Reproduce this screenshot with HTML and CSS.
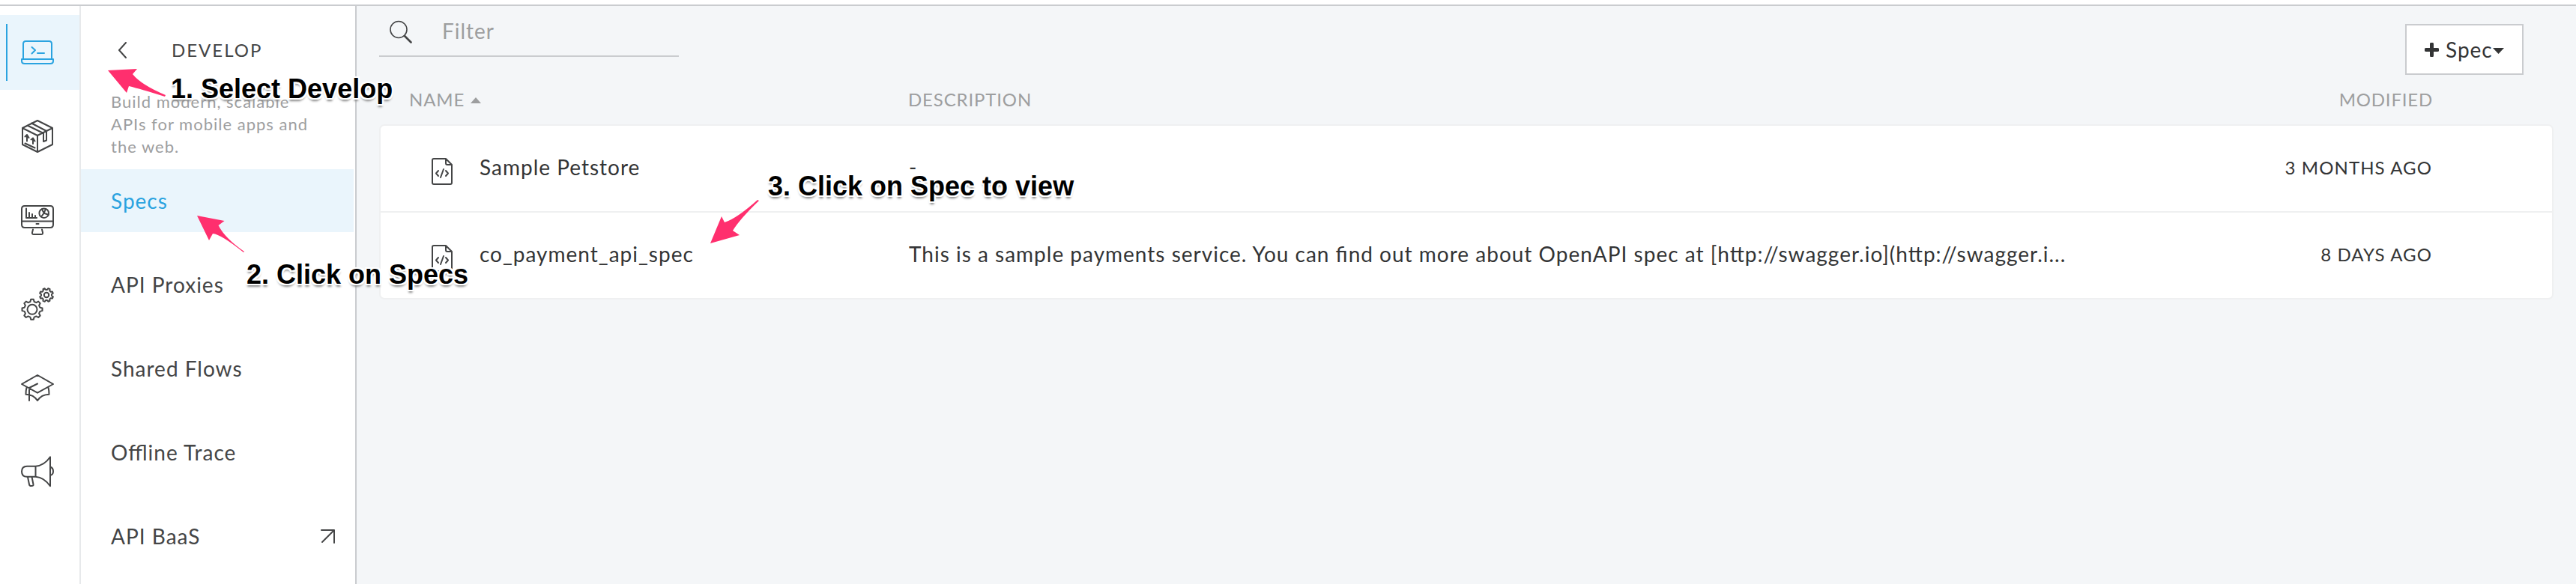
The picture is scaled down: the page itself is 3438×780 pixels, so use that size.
FILE: index.html
```html
<!DOCTYPE html>
<html lang="en">
<head>
<meta charset="utf-8">
<title>Specs</title>
<link rel="stylesheet" href="styles.css">
</head>
<body>
<div class="app">
  <nav class="rail">
    <a class="rail-item active"><svg viewBox="0 0 44 44"><path d="M3 31V10.500Q3 7 6.500 7h31q3.500 0 3.500 3.500V31M1 31h42v2.500q0 3.500-4 3.500H5q-4 0-4-3.500zM14.500 15l4.500 4-4.500 4.500M22 23h9"/></svg></a>
    <a class="rail-item"><svg viewBox="0 0 44 44"><path d="M22 1l20 10v22L22 43 2 33V11zM2 11l20 10 20-10M22 21v22M8.500 7.500L30 18v11l4-1.500V15L14 4.500M8 20v8.500M5.500 22.500L8 20l2.500 4M16 24.500V32M13.500 26.500l2.500-2 2.500 4M5.500 31.500l13 6"/></svg></a>
    <a class="rail-item"><svg viewBox="0 0 44 44"><path d="M5 3h34q4 0 4 4v21q0 4-4 4H5q-4 0-4-4V7q0-4 4-4zM1 23.500h42M20.500 27h3M16 34.500l-1 4q-.500 2.500 2 2.500h10q2.500 0 2-2.500l-1-4M7 6.500V19h14M11 19v-7M15 19v-5M19 19v-3"/><circle cx="30.700" cy="12.700" r="6.300"/><path d="M28 7.500l2.700 5.200L33 7M30.700 12.700l6 2M30.700 12.700L27 17.500"/></svg></a>
    <a class="rail-item"><svg viewBox="0 0 44 44"><defs><path id="gear" vector-effect="non-scaling-stroke" d="M-2.600-10.300L-1.800-13.500H1.800L2.600-10.300 5.400-9.100 8.200-10.700 10.700-8.200 9.100-5.400 10.300-2.600 13.500-1.800V1.800L10.300 2.600 9.100 5.400 10.700 8.200 8.200 10.700 5.400 9.100 2.600 10.300 1.800 13.500H-1.800L-2.600 10.300-5.400 9.100-8.200 10.700-10.700 8.200-9.100 5.400-10.300 2.600-13.500 1.800V-1.800L-10.300-2.600-9.100-5.400-10.700-8.200-8.200-10.700-5.400-9.100z"/></defs><use href="#gear" transform="translate(15 29.300)"/><circle cx="15" cy="29.300" r="6.500"/><use href="#gear" transform="translate(34 10) rotate(22.500) scale(.67)"/><circle cx="34" cy="10" r="3.200"/></svg></a>
    <a class="rail-item"><svg viewBox="0 0 44 44"><path d="M1 17L22 5l21 12-21 11.700zM22 16.500L11 22v17M7.500 21.500q-1 4-1 9.200Q17 31 22 39q5-8 15.500-8.300 0-5.200-1-9.200"/></svg></a>
    <a class="rail-item"><svg viewBox="0 0 44 44"><path d="M19.500 14.700H8q-7 0-7 7t7 7h11.500zM19.500 14.700Q31 14 39 2.300v39Q31 29.500 19.500 28.700M39 15.500q4 1.500 4 6T39 27M9 29l2 10q.500 2.500 3 2 3 0 2.500-2L14.500 29"/></svg></a>
  </nav>
  <aside class="panel">
    <div class="panel-head"><svg class="back" viewBox="0 0 12 22"><path d="M11 1L2 11l9 10"/></svg><h1>DEVELOP</h1></div>
    <p class="blurb">Build modern, scalable APIs for mobile apps and the web.</p>
    <ul class="menu">
      <li class="active"><span>Specs</span></li>
      <li><span>API Proxies</span></li>
      <li><span>Shared Flows</span></li>
      <li><span>Offline Trace</span></li>
      <li><span>API BaaS</span><svg class="ext" viewBox="0 0 20 20"><path d="M1 2h17v17M18 2L2 18"/></svg></li>
    </ul>
  </aside>
  <main class="main">
    <div class="toolbar">
      <div class="filter"><svg viewBox="0 0 30 31"><circle cx="12" cy="12.500" r="11"/><path class="handle" d="M20 21l8.500 8.500"/></svg><span>Filter</span></div>
      <button class="add"><svg class="plus" viewBox="0 0 19 19"><path d="M9.500 2v15M2 9.500h15"/></svg><span>Spec</span><svg class="caret" viewBox="0 0 15 8"><path d="M0 0h15L7.500 8z"/></svg></button>
    </div>
    <div class="row head"><span class="name">NAME<svg class="sort" viewBox="0 0 14 8"><path d="M7 0l7 8H0z"/></svg></span><span class="desc">DESCRIPTION</span><span class="mod">MODIFIED</span></div>
    <div class="table">
      <div class="row"><span class="name"><svg class="file" viewBox="0 0 28 36"><path d="M3 1h16l8 8v24q0 2-2 2H3q-2 0-2-2V3q0-2 2-2zM19 1v6q0 2 2 2h6M9 17l-3 3.500 3 3.500M19 17l3 3.500-3 3.500M16 15l-4 11"/></svg><span>Sample Petstore</span></span><span class="desc">-</span><span class="mod">3 MONTHS AGO</span></div>
      <div class="row"><span class="name"><svg class="file" viewBox="0 0 28 36"><path d="M3 1h16l8 8v24q0 2-2 2H3q-2 0-2-2V3q0-2 2-2zM19 1v6q0 2 2 2h6M9 17l-3 3.500 3 3.500M19 17l3 3.500-3 3.500M16 15l-4 11"/></svg><span>co_payment_api_spec</span></span><span class="desc">This is a sample payments service. You can find out more about OpenAPI spec at [http://swagger.io](http://swagger.i...</span><span class="mod">8 DAYS AGO</span></div>
    </div>
  </main>
</div>
<svg class="arrows" viewBox="0 0 3438 780">
  <path d="M144 94L183 92 177 99Q188 113 221 127L220 129Q188 119 172 115L169 124z"/>
  <path d="M263 288L299.500 295 291.500 301Q300 318 326 336L325 337Q295 313 284 312L279 321z"/>
  <path d="M948 325L963 289 967 297Q983 292 1011 267L1013 268Q987 293 978 308L987 314z"/>
</svg>
<div class="note note-1">1. Select Develop</div>
<div class="note note-2">2. Click on Specs</div>
<div class="note note-3">3. Click on Spec to view</div>
</body>
</html>
```
FILE: styles.css
```css
* { box-sizing: border-box; }
body { margin: 0; padding-top: 6px; background: #fff; color: #333435; font-family: Lato, "Open Sans", sans-serif; font-size: 28px; letter-spacing: 1px; font-feature-settings: "liga" 1; }
svg { flex: none; fill: none; stroke: #444546; stroke-width: 2; stroke-linejoin: round; stroke-linecap: round; }

.app { display: flex; height: 774px; border-top: 2px solid #cacccf; overflow: hidden; }

/* Icon rail */
.rail { width: 108px; flex: none; padding-top: 12px; border-right: 2px solid #e7e9eb; }
.rail-item { display: flex; align-items: center; height: 100px; margin-bottom: 12px; padding-left: 28px; }
.rail-item.active { position: relative; background: #eaf5fc; }
.rail-item.active::before { content: ""; position: absolute; left: 8px; top: 12px; width: 2px; height: 76px; background: #2aa3e0; }
.rail-item svg { width: 44px; height: 44px; }
.rail-item.active svg { stroke: #2aa3e0; }

/* Section panel */
.panel { width: 368px; flex: none; border-right: 2px solid #cacccf; padding-right: 2px; color: #444546; }
.panel-head { display: flex; align-items: center; height: 113px; padding: 4px 0 0 49px; }
.back { width: 12px; height: 22px; }
.panel h1 { margin: 0 0 0 60px; font-size: 24px; font-weight: 400; letter-spacing: 2px; }
.blurb { margin: 0; height: 105px; padding: 0 50px 0 40px; font-size: 22px; line-height: 30px; color: #9d9e9f; }
.menu { list-style: none; margin: 0; padding: 0; }
.menu li { display: flex; align-items: center; justify-content: space-between; height: 84px; margin-bottom: 28px; padding: 0 24px 0 40px; }
.menu .active { background: #eaf5fc; color: #2aa3e0; }
.ext { width: 20px; height: 20px; }

/* Content */
.main { flex: 1; background: #f4f6f8; padding: 0 30px; }
.toolbar { display: flex; justify-content: space-between; height: 92px; padding-right: 40px; }
.filter { display: flex; align-items: center; width: 400px; height: 68px; padding-left: 14px; border-bottom: 2px solid #cacccf; color: #9d9e9f; }
.filter svg { width: 30px; height: 31px; margin: 2px 40px 0 0; stroke-width: 1.6; }
.filter .handle { stroke-width: 2.6; }
.add { display: flex; align-items: center; width: 158px; height: 68px; margin-top: 24px; padding: 0 0 0 24px; border: 2px solid #cacccf; background: #fff; font: inherit; letter-spacing: inherit; color: inherit; }
.plus { width: 19px; height: 19px; margin-right: 9px; }
.plus path { stroke: #333435; stroke-width: 5; }
.caret { width: 15px; height: 8px; margin-top: 3px; fill: #333435; stroke: none; }

.table { border: 2px solid #eff0f1; border-radius: 7px; background: #fff; }
.row { display: flex; align-items: center; height: 114px; padding-bottom: 4px; }
.row + .row { height: 116px; border-top: 2px solid #eff0f1; }
.name { display: flex; align-items: center; width: 705px; padding-left: 68px; }
.file { width: 28px; height: 36px; margin: 12px 36px 0 0; }
.desc { flex: 1; white-space: nowrap; }
.mod { width: 400px; padding-right: 160px; text-align: right; font-size: 24px; letter-spacing: 1.1px; white-space: nowrap; }
.head { height: 66px; padding: 0 2px 2px 1px; font-size: 24px; letter-spacing: .85px; color: #9d9e9f; }
.head .name { padding-left: 39px; }
.head .mod { padding-right: 159px; letter-spacing: .8px; }
.sort { width: 14px; height: 8px; margin: 4px 0 0 8px; fill: #9d9e9f; stroke: none; }

/* Callouts over the page */
.arrows { position: absolute; left: 0; top: 0; width: 3438px; height: 780px; fill: #ff2f6e; stroke: none; }
.note { position: absolute; font: bold 36px/40px "Liberation Sans", Arial, sans-serif; letter-spacing: 0; color: #000; white-space: nowrap; text-shadow: 2px 0 #fff, -2px 0 #fff, 0 2px #fff, 0 -2px #fff, 2px 2px #fff, -2px 2px #fff, 2px -2px #fff, -2px -2px #fff, 0 4px 3px #888; }
.note-1 { left: 228px; top: 99px; }
.note-2 { left: 329px; top: 347px; }
.note-3 { left: 1025px; top: 229px; }
```
